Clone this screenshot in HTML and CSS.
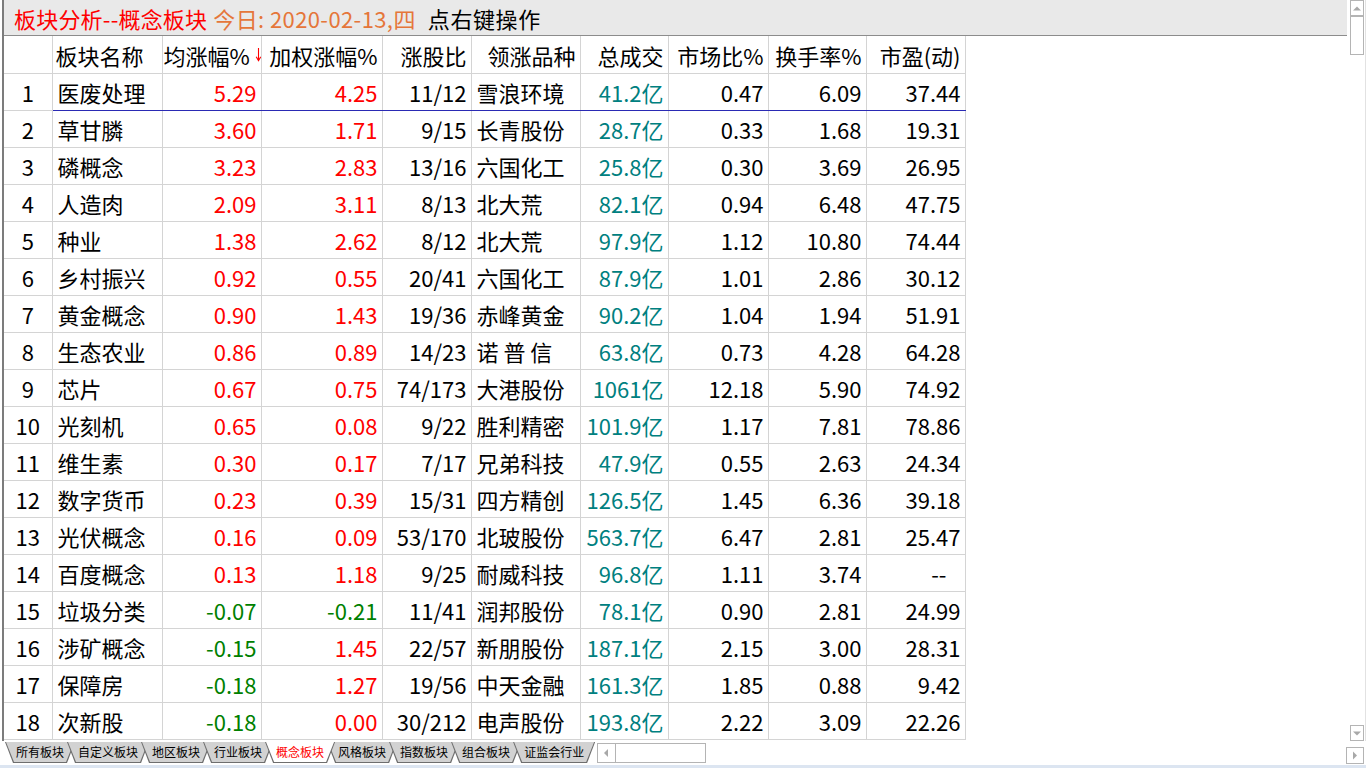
FILE: index.html
```html
<!DOCTYPE html>
<html lang="zh-CN">
<head>
<meta charset="utf-8">
<title>板块分析--概念板块</title>
<link rel="stylesheet" href="styles.css">
</head>
<body>
<div class="app">
  <div class="top">
    <div class="main">
      <div class="titlebar">
        <span class="t-red">板块分析--概念板块</span>
        <span class="t-orange">今日: 2020-02-13,四</span>
        <span class="t-black">点右键操作</span>
      </div>
      <table class="grid">
        <colgroup>
          <col class="c1"><col class="c2"><col class="c3"><col class="c4"><col class="c5">
          <col class="c6"><col class="c7"><col class="c8"><col class="c9"><col class="c10">
        </colgroup>
        <thead>
          <tr>
            <th></th>
            <th class="l">板块名称</th>
            <th class="sorted">均涨幅%<svg class="sortarrow" width="7" height="15" viewBox="0 0 7 15"><path d="M3.5 1V13" stroke="#f00" stroke-width="1.1"/><path d="M1.2 9.8L3.5 13.6L5.8 9.8" fill="none" stroke="#f00" stroke-width="1.1"/></svg></th>
            <th>加权涨幅%</th>
            <th>涨股比</th>
            <th>领涨品种</th>
            <th>总成交</th>
            <th>市场比%</th>
            <th>换手率%</th>
            <th>市盈(动)</th>
          </tr>
        </thead>
        <tbody>
          <tr class="sel"><td>1</td><td class="l">医废处理</td><td class="up">5.29</td><td class="up">4.25</td><td>11/12</td><td class="l">雪浪环境</td><td class="amt">41.2亿</td><td>0.47</td><td>6.09</td><td>37.44</td></tr>
          <tr><td>2</td><td class="l">草甘膦</td><td class="up">3.60</td><td class="up">1.71</td><td>9/15</td><td class="l">长青股份</td><td class="amt">28.7亿</td><td>0.33</td><td>1.68</td><td>19.31</td></tr>
          <tr><td>3</td><td class="l">磷概念</td><td class="up">3.23</td><td class="up">2.83</td><td>13/16</td><td class="l">六国化工</td><td class="amt">25.8亿</td><td>0.30</td><td>3.69</td><td>26.95</td></tr>
          <tr><td>4</td><td class="l">人造肉</td><td class="up">2.09</td><td class="up">3.11</td><td>8/13</td><td class="l">北大荒</td><td class="amt">82.1亿</td><td>0.94</td><td>6.48</td><td>47.75</td></tr>
          <tr><td>5</td><td class="l">种业</td><td class="up">1.38</td><td class="up">2.62</td><td>8/12</td><td class="l">北大荒</td><td class="amt">97.9亿</td><td>1.12</td><td>10.80</td><td>74.44</td></tr>
          <tr><td>6</td><td class="l">乡村振兴</td><td class="up">0.92</td><td class="up">0.55</td><td>20/41</td><td class="l">六国化工</td><td class="amt">87.9亿</td><td>1.01</td><td>2.86</td><td>30.12</td></tr>
          <tr><td>7</td><td class="l">黄金概念</td><td class="up">0.90</td><td class="up">1.43</td><td>19/36</td><td class="l">赤峰黄金</td><td class="amt">90.2亿</td><td>1.04</td><td>1.94</td><td>51.91</td></tr>
          <tr><td>8</td><td class="l">生态农业</td><td class="up">0.86</td><td class="up">0.89</td><td>14/23</td><td class="l">诺 普 信</td><td class="amt">63.8亿</td><td>0.73</td><td>4.28</td><td>64.28</td></tr>
          <tr><td>9</td><td class="l">芯片</td><td class="up">0.67</td><td class="up">0.75</td><td>74/173</td><td class="l">大港股份</td><td class="amt">1061亿</td><td>12.18</td><td>5.90</td><td>74.92</td></tr>
          <tr><td>10</td><td class="l">光刻机</td><td class="up">0.65</td><td class="up">0.08</td><td>9/22</td><td class="l">胜利精密</td><td class="amt">101.9亿</td><td>1.17</td><td>7.81</td><td>78.86</td></tr>
          <tr><td>11</td><td class="l">维生素</td><td class="up">0.30</td><td class="up">0.17</td><td>7/17</td><td class="l">兄弟科技</td><td class="amt">47.9亿</td><td>0.55</td><td>2.63</td><td>24.34</td></tr>
          <tr><td>12</td><td class="l">数字货币</td><td class="up">0.23</td><td class="up">0.39</td><td>15/31</td><td class="l">四方精创</td><td class="amt">126.5亿</td><td>1.45</td><td>6.36</td><td>39.18</td></tr>
          <tr><td>13</td><td class="l">光伏概念</td><td class="up">0.16</td><td class="up">0.09</td><td>53/170</td><td class="l">北玻股份</td><td class="amt">563.7亿</td><td>6.47</td><td>2.81</td><td>25.47</td></tr>
          <tr><td>14</td><td class="l">百度概念</td><td class="up">0.13</td><td class="up">1.18</td><td>9/25</td><td class="l">耐威科技</td><td class="amt">96.8亿</td><td>1.11</td><td>3.74</td><td class="dash">--</td></tr>
          <tr><td>15</td><td class="l">垃圾分类</td><td class="dn">-0.07</td><td class="dn">-0.21</td><td>11/41</td><td class="l">润邦股份</td><td class="amt">78.1亿</td><td>0.90</td><td>2.81</td><td>24.99</td></tr>
          <tr><td>16</td><td class="l">涉矿概念</td><td class="dn">-0.15</td><td class="up">1.45</td><td>22/57</td><td class="l">新朋股份</td><td class="amt">187.1亿</td><td>2.15</td><td>3.00</td><td>28.31</td></tr>
          <tr><td>17</td><td class="l">保障房</td><td class="dn">-0.18</td><td class="up">1.27</td><td>19/56</td><td class="l">中天金融</td><td class="amt">161.3亿</td><td>1.85</td><td>0.88</td><td>9.42</td></tr>
          <tr><td>18</td><td class="l">次新股</td><td class="dn">-0.18</td><td class="up">0.00</td><td>30/212</td><td class="l">电声股份</td><td class="amt">193.8亿</td><td>2.22</td><td>3.09</td><td>22.26</td></tr>
        </tbody>
      </table>
    </div>
    <div class="vscroll">
      <div class="sbtn"><svg width="12" height="14" viewBox="0 0 12 14"><path d="M2 9.5H10L6 5.5Z" fill="#a8a8a8"/></svg></div>
      <div class="thumb"></div>
      <div class="spacer"></div>
      <div class="sbtn"><svg width="12" height="14" viewBox="0 0 12 14"><path d="M2 5.5H10L6 9.5Z" fill="#a8a8a8"/></svg></div>
    </div>
  </div>
  <div class="bottom">
    <div class="tabrow">
      <div class="tabs">
        <div class="tab"><div class="tab-in">所有板块</div></div>
        <div class="tab"><div class="tab-in">自定义板块</div></div>
        <div class="tab"><div class="tab-in">地区板块</div></div>
        <div class="tab"><div class="tab-in">行业板块</div></div>
        <div class="tab active"><div class="tab-in">概念板块</div></div>
        <div class="tab"><div class="tab-in">风格板块</div></div>
        <div class="tab"><div class="tab-in">指数板块</div></div>
        <div class="tab"><div class="tab-in">组合板块</div></div>
        <div class="tab"><div class="tab-in">证监会行业</div></div>
      </div>
      <div class="hscroll">
        <div class="hbtn"><svg width="16" height="18" viewBox="0 0 16 18"><path d="M10 5V13L6 9Z" fill="#a8a8a8"/></svg></div>
      </div>
      <div class="rbtn"><svg width="16" height="15" viewBox="0 0 16 15"><path d="M6 3.5V11.5L10 7.5Z" fill="#a8a8a8"/></svg></div>
    </div>
    <div class="strip"></div>
  </div>
</div>
</body>
</html>
```

FILE: styles.css
```css
html, body {
  margin: 0;
  padding: 0;
  background: #ffffff;
}
body {
  width: 1366px;
  height: 768px;
  overflow: hidden;
  font-family: "Noto Sans CJK SC", "Noto Sans", sans-serif;
}
.app {
  display: flex;
  flex-direction: column;
  width: 1366px;
  height: 768px;
}
.top {
  display: flex;
  height: 741px;
}
.main {
  width: 1345px;
  margin-left: 2px;
  border-left: 2px solid #7c7c7c;
  display: flex;
  flex-direction: column;
}
.titlebar {
  height: 35px;
  border-bottom: 1px solid #8c8c8c;
  background: #e9e9e9;
  display: flex;
  align-items: center;
  padding-left: 10px;
  font-size: 22px;
  line-height: 1;
  white-space: nowrap;
}
.t-red { color: #ff0000; letter-spacing: 0.2px; }
.t-orange { color: #e5763a; margin-left: 6px; letter-spacing: 0.4px; }
.t-black { color: #000000; margin-left: 12px; letter-spacing: 0.6px; }

.grid {
  border-collapse: collapse;
  table-layout: fixed;
  width: 961px;
  font-size: 22px;
  color: #000;
}
.c1 { width: 48px; }
.c2 { width: 110px; }
.c3 { width: 99px; }
.c4 { width: 121px; }
.c5 { width: 89px; }
.c6 { width: 109px; }
.c7 { width: 88px; }
.c8 { width: 100px; }
.c9 { width: 98px; }
.c10 { width: 99px; }

.grid th, .grid td {
  height: 36px;
  padding: 0 4px 0 4px;
  border: 1px solid #d4d4d4;
  text-align: right;
  vertical-align: middle;
  white-space: nowrap;
  font-weight: normal;
  line-height: 1;
  overflow: hidden;
}
.grid th { border-top: none; height: 37px; }
.grid th:first-child, .grid td:first-child {
  border-left: none;
  text-align: center;
  padding: 0;
}
.grid .l { text-align: left; padding-left: 5px; }
.grid th.l { padding-left: 3px; }
.grid th.sorted { padding-right: 4px; text-align: left; padding-left: 1px; }
.grid .up { color: #ff0000; }
.grid .dn { color: #008000; }
.grid .amt { color: #008080; }
.grid td.dash { padding-right: 18px; }
.grid tr.sel td { border-bottom-color: #2a2ab4; }
.grid tr.sel td:first-child { border-bottom-color: #d4d4d4; }
.sortarrow {
  vertical-align: 3px;
  margin-left: 5px;
}

.vscroll {
  border-right: 1px solid #e2e2e2;
  display: flex;
  flex-direction: column;
  align-items: flex-start;
  padding-left: 1px;
  box-sizing: border-box;
  width: 17px;
  margin-left: 2px;
}
.sbtn {
  width: 12px;
  height: 14px;
  border: 1px solid #b4b4b4;
  display: flex;
  align-items: center;
  justify-content: center;
}
.thumb {
  width: 12px;
  height: 37px;
  border: 1px solid #b4b4b4;
}
.spacer { flex: 1; }

.bottom {
  height: 27px;
  display: flex;
  flex-direction: column;
}
.tabrow {
  height: 23px;
  display: flex;
  align-items: flex-start;
}
.tabs {
  display: flex;
  margin-left: 5px;
  margin-top: 1px;
}
.tab {
  position: relative;
  height: 21px;
  background: #6e6e6e;
  clip-path: polygon(0 0, 100% 0, calc(100% - 8px) 100%, 8px 100%);
  margin-left: -8px;
}
.tab:first-child { margin-left: 0; }
.tab-in {
  height: 20px;
  margin: 0 1px 1px 1px;
  padding: 0 10px;
  background: #d2d2d2;
  clip-path: polygon(0 0, 100% 0, calc(100% - 8px) 100%, 8px 100%);
  font-size: 12px;
  line-height: 20px;
  color: #000;
  white-space: nowrap;
}
.tab.active { z-index: 2; }
.tab.active .tab-in {
  background: #ffffff;
  color: #ff0000;
}
.hscroll {
  margin-left: 2px;
  margin-top: 2px;
  width: 107px;
  height: 18px;
  border: 1px solid #b4b4b4;
  display: flex;
}
.hbtn {
  width: 17px;
  height: 18px;
  border-right: 1px solid #b4b4b4;
}
.hbtn svg { display: block; }
.rbtn {
  margin-left: auto;
  margin-right: 2px;
  margin-top: 6px;
  width: 16px;
  height: 15px;
  border: 1px solid #b4b4b4;
}
.rbtn svg { display: block; }
.strip {
  flex: 1;
  background: #dce5f1;
  border-top: 1px solid #ffffff;
}
```
